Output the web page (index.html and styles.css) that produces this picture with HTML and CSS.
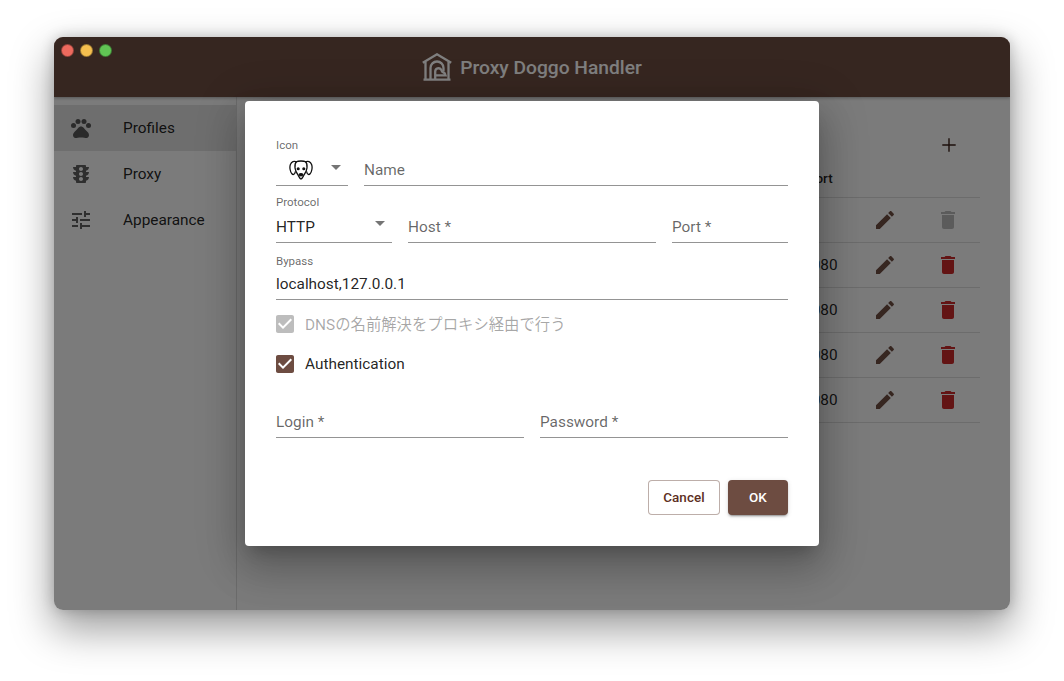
FILE: index.html
```html
<!DOCTYPE html>
<html lang="en">
<head>
<meta charset="utf-8">
<title>Proxy Doggo Handler</title>
<link rel="stylesheet" href="styles.css">
</head>
<body>
<div class="window">
  <header class="titlebar">
    <svg class="logo" viewBox="0 0 30 28" fill="none" stroke="currentColor" stroke-width="2.300"><path d="M.8 9.800 15 1.300l14.200 8.500M3.500 8.500V27M26.500 8.500V27M1.500 26.600h27M8.500 26V15a6.500 6.500 0 0 1 13 0v3.500"/><path d="M13.200 26v-7.500a3.300 3.300 0 0 1 6-1.800l1 2 2.500 1.500.8 2.200H13.200"/></svg>
    <span class="app-title">Proxy Doggo Handler</span>
  </header>
  <div class="body">
    <nav class="sidebar">
      <div class="nav-item nav-item-active">
        <svg class="icon" viewBox="0 0 24 24"><circle cx="4.500" cy="9.500" r="2.500"/><circle cx="9" cy="5.500" r="2.500"/><circle cx="15" cy="5.500" r="2.500"/><circle cx="19.500" cy="9.500" r="2.500"/><path d="M17.340 14.860c-.87-1.020-1.600-1.890-2.480-2.910-.46-.54-1.050-1.080-1.750-1.320-.11-.04-.22-.07-.33-.09-.25-.04-.52-.04-.78-.04s-.53 0-.79.050c-.11.020-.22.050-.33.090-.7.240-1.280.78-1.750 1.320-.87 1.020-1.600 1.890-2.480 2.910-1.310 1.310-2.920 2.760-2.620 4.790.29 1.020 1.020 2.030 2.330 2.320.73.150 3.060-.44 5.540-.44h.18c2.480 0 4.810.58 5.540.44 1.310-.29 2.040-1.310 2.330-2.320.31-2.040-1.300-3.490-2.610-4.800z"/></svg>
        <span>Profiles</span>
      </div>
      <div class="nav-item">
        <svg class="icon" viewBox="0 0 24 24"><path d="M20 10h-3V8.860c1.720-.45 3-2 3-3.860h-3V4c0-.55-.45-1-1-1H8c-.55 0-1 .45-1 1v1H4c0 1.860 1.280 3.410 3 3.860V10H4c0 1.860 1.280 3.410 3 3.860V15H4c0 1.860 1.280 3.410 3 3.860V20c0 .55.45 1 1 1h8c.55 0 1-.45 1-1v-1.140c1.720-.45 3-2 3-3.860h-3v-1.140c1.720-.45 3-2 3-3.860zm-8 9c-1.110 0-2-.9-2-2s.89-2 2-2c1.100 0 2 .9 2 2s-.89 2-2 2zm0-5c-1.110 0-2-.9-2-2s.89-2 2-2c1.100 0 2 .9 2 2s-.89 2-2 2zm0-5c-1.110 0-2-.9-2-2 0-1.110.89-2 2-2 1.100 0 2 .89 2 2 0 1.100-.89 2-2 2z"/></svg>
        <span>Proxy</span>
      </div>
      <div class="nav-item">
        <svg class="icon" viewBox="0 0 24 24"><path d="M3 17v2h6v-2H3zM3 5v2h10V5H3zm10 16v-2h8v-2h-8v-2h-2v6h2zM7 9v2H3v2h4v2h2V9H7zm14 4v-2H11v2h10zm-6-4h2V7h4V5h-4V3h-2v6z"/></svg>
        <span>Appearance</span>
      </div>
    </nav>
    <main class="content">
      <div class="toolbar">
        <svg class="icon icon-add" viewBox="0 0 24 24"><path d="M18.700 12.700h-6v6h-1.400v-6h-6v-1.400h6v-6h1.400v6h6z"/></svg>
      </div>
      <div class="table">
        <div class="row row-head"><span class="port">Port</span></div>
        <div class="row"><span class="port"></span><svg class="icon icon-edit" viewBox="0 0 24 24"><path d="M3 17.250V21h3.750L17.810 9.940l-3.750-3.750L3 17.250zM20.710 7.040c.39-.39.39-1.020 0-1.410l-2.340-2.340c-.39-.39-1.020-.39-1.410 0l-1.830 1.830 3.750 3.750 1.830-1.830z"/></svg><svg class="icon icon-del icon-del-off" viewBox="0 0 24 24"><path d="M6 19c0 1.100.9 2 2 2h8c1.100 0 2-.9 2-2V7H6v12zM19 4h-3.500l-1-1h-5l-1 1H5v2h14V4z"/></svg></div>
        <div class="row"><span class="port">8080</span><svg class="icon icon-edit" viewBox="0 0 24 24"><path d="M3 17.250V21h3.750L17.810 9.940l-3.750-3.750L3 17.250zM20.710 7.040c.39-.39.39-1.020 0-1.410l-2.340-2.340c-.39-.39-1.020-.39-1.410 0l-1.830 1.830 3.750 3.750 1.830-1.830z"/></svg><svg class="icon icon-del" viewBox="0 0 24 24"><path d="M6 19c0 1.100.9 2 2 2h8c1.100 0 2-.9 2-2V7H6v12zM19 4h-3.500l-1-1h-5l-1 1H5v2h14V4z"/></svg></div>
        <div class="row"><span class="port">8080</span><svg class="icon icon-edit" viewBox="0 0 24 24"><path d="M3 17.250V21h3.750L17.810 9.940l-3.750-3.750L3 17.250zM20.710 7.040c.39-.39.39-1.020 0-1.410l-2.340-2.340c-.39-.39-1.020-.39-1.410 0l-1.830 1.830 3.750 3.750 1.830-1.830z"/></svg><svg class="icon icon-del" viewBox="0 0 24 24"><path d="M6 19c0 1.100.9 2 2 2h8c1.100 0 2-.9 2-2V7H6v12zM19 4h-3.500l-1-1h-5l-1 1H5v2h14V4z"/></svg></div>
        <div class="row"><span class="port">8080</span><svg class="icon icon-edit" viewBox="0 0 24 24"><path d="M3 17.250V21h3.750L17.810 9.940l-3.750-3.750L3 17.250zM20.710 7.040c.39-.39.39-1.020 0-1.410l-2.340-2.340c-.39-.39-1.020-.39-1.410 0l-1.830 1.830 3.750 3.750 1.830-1.830z"/></svg><svg class="icon icon-del" viewBox="0 0 24 24"><path d="M6 19c0 1.100.9 2 2 2h8c1.100 0 2-.9 2-2V7H6v12zM19 4h-3.500l-1-1h-5l-1 1H5v2h14V4z"/></svg></div>
        <div class="row"><span class="port">8080</span><svg class="icon icon-edit" viewBox="0 0 24 24"><path d="M3 17.250V21h3.750L17.810 9.940l-3.750-3.750L3 17.250zM20.710 7.040c.39-.39.39-1.020 0-1.410l-2.340-2.340c-.39-.39-1.020-.39-1.410 0l-1.830 1.830 3.750 3.750 1.830-1.830z"/></svg><svg class="icon icon-del" viewBox="0 0 24 24"><path d="M6 19c0 1.100.9 2 2 2h8c1.100 0 2-.9 2-2V7H6v12zM19 4h-3.500l-1-1h-5l-1 1H5v2h14V4z"/></svg></div>
      </div>
    </main>
  </div>

  <div class="backdrop">
    <section class="modal">
      <div class="form-row">
        <div class="field field-icon">
          <span class="field-label">Icon</span>
          <div class="control">
            <svg class="dog" viewBox="0 0 24 20" fill="none" stroke="#111" stroke-width="1.300" stroke-linecap="round" stroke-linejoin="round"><path d="M7.500 1.800C9 .7 15 .7 16.500 1.800c1.200 1 1.800 3.200 1.500 6-.3 2.300-1.300 4.700-2.800 6.800-.9 1.300-1.800 4.400-3.200 4.400s-2.300-3.100-3.200-4.400C7.300 12.500 6.300 10.100 6 7.800c-.3-2.800.3-5 1.500-6z"/><path d="M7.500 1.800C5 .7 2.500 1.800 1.400 4.400.4 7 1 11.600 2.900 13.800c1.300 1.400 3 .5 3.300-1.800M16.500 1.800C19 .7 21.500 1.800 22.600 4.400c1 2.600.4 7.200-1.500 9.400-1.300 1.400-3 .5-3.300-1.800"/><path d="M10.200 14.300c.8-.6 2.800-.6 3.600 0-.2 1-1.100 1.600-1.800 1.600s-1.600-.6-1.800-1.600z" fill="#111"/><circle cx="9.200" cy="8.800" r=".9" fill="#111"/><circle cx="14.800" cy="8.800" r=".9" fill="#111"/></svg>
            <svg class="arrow" viewBox="0 0 24 24"><path d="M7 10l5 5 5-5z"/></svg>
          </div>
        </div>
        <div class="field field-grow">
          <div class="control"><span class="placeholder">Name</span></div>
        </div>
      </div>
      <div class="form-row">
        <div class="field field-protocol">
          <span class="field-label">Protocol</span>
          <div class="control">
            <span class="value">HTTP</span>
            <svg class="arrow" viewBox="0 0 24 24"><path d="M7 10l5 5 5-5z"/></svg>
          </div>
        </div>
        <div class="field field-grow">
          <div class="control"><span class="placeholder">Host *</span></div>
        </div>
        <div class="field field-port">
          <div class="control"><span class="placeholder">Port *</span></div>
        </div>
      </div>
      <div class="form-row form-row-bypass">
        <div class="field field-grow">
          <span class="field-label">Bypass</span>
          <div class="control"><span class="value">localhost,127.0.0.1</span></div>
        </div>
      </div>
      <div class="checks">
        <label class="check check-off">
          <svg class="icon" viewBox="0 0 24 24"><path d="M19 3H5c-1.110 0-2 .9-2 2v14c0 1.100.89 2 2 2h14c1.100 0 2-.9 2-2V5c0-1.110-.89-2-2-2zm-9 14l-5-5 1.410-1.410L10 14.170l7.590-7.590L19 8l-9 9z"/></svg>
          <span class="check-text">DNSの名前解決をプロキシ経由で行う</span>
        </label>
        <label class="check">
          <svg class="icon" viewBox="0 0 24 24"><path d="M19 3H5c-1.110 0-2 .9-2 2v14c0 1.100.89 2 2 2h14c1.100 0 2-.9 2-2V5c0-1.110-.89-2-2-2zm-9 14l-5-5 1.410-1.410L10 14.170l7.590-7.590L19 8l-9 9z"/></svg>
          <span class="check-text">Authentication</span>
        </label>
      </div>
      <div class="form-row form-row-auth">
        <div class="field field-half"><div class="control"><span class="placeholder">Login *</span></div></div>
        <div class="field field-half"><div class="control"><span class="placeholder">Password *</span></div></div>
      </div>
      <div class="actions">
        <button class="btn btn-outline" type="button">Cancel</button>
        <button class="btn btn-primary" type="button">OK</button>
      </div>
    </section>
  </div>

  <div class="traffic">
    <span class="light light-red"></span>
    <span class="light light-yellow"></span>
    <span class="light light-green"></span>
  </div>
</div>
</body>
</html>
```
FILE: styles.css
```css
* { box-sizing: border-box; }
html, body { height: 100%; }
body {
  margin: 0;
  padding: 37px 54px 71px;
  background: #fff;
  font-family: Roboto, "Noto Sans CJK JP", sans-serif;
  color: rgba(0,0,0,.87);
  overflow: hidden;
}
.window {
  position: relative;
  height: 573px;
  border-radius: 9px;
  background: #f6f6f6;
  box-shadow: 0 18px 40px 2px rgba(0,0,0,.38), 0 0 14px rgba(0,0,0,.2);
  overflow: hidden;
  display: flex;
  flex-direction: column;
}
.titlebar {
  height: 60px;
  flex: none;
  background: #6d4c41;
  color: #fff;
  display: flex;
  align-items: center;
  justify-content: center;
  gap: 8px;
  box-shadow: 0 1px 3px rgba(0,0,0,.3);
  position: relative;
}
.logo { width: 30px; height: 28px; }
.app-title { font-size: 19.200px; font-weight: 500; }
.body { flex: 1; display: flex; min-height: 0; }
.sidebar {
  width: 183px;
  flex: none;
  padding-top: 8px;
  border-right: 1px solid rgba(0,0,0,.12);
}
.nav-item {
  height: 46px;
  display: flex;
  align-items: center;
  padding-left: 15px;
  gap: 30px;
  font-size: 15.360px;
}
.nav-item-active { background: rgba(0,0,0,.1); }
.icon { width: 24px; height: 24px; fill: currentColor; flex: none; display: block; }
.nav-item .icon { fill: rgba(0,0,0,.62); }
.content { flex: 1; padding: 36px 30px 0 0; min-width: 0; }
.toolbar { height: 24px; display: flex; justify-content: flex-end; padding-right: 19px; }
.icon-add { color: #3a2018; }
.table { margin: 8px 0 0 30px; }
.row {
  height: 45px;
  display: flex;
  align-items: center;
  justify-content: flex-end;
  border-bottom: 1px solid rgba(0,0,0,.12);
  font-size: 15.360px;
}
.row-head { height: 33px; font-size: 13.440px; font-weight: 500; justify-content: flex-start; padding-left: 540px; align-items: flex-start; padding-top: 6px; }
.port { display: block; }
.row .port { width: 70px; margin-right: auto; margin-left: 536px; }
.row-head .port { width: auto; margin: 0; }
.icon-edit { color: #6d4c41; margin-right: 39px; }
.icon-del { color: #c62828; margin-right: 20px; }
.icon-del-off { color: rgba(0,0,0,.26); }
.backdrop {
  position: absolute;
  inset: 0;
  background: rgba(0,0,0,.5);
  display: flex;
  align-items: center;
  justify-content: center;
}
.modal {
  width: 574px;
  height: 445px;
  padding: 38px 31px 31px;
  background: #fff;
  border-radius: 4px;
  box-shadow: 0 11px 15px -7px rgba(0,0,0,.2), 0 24px 38px 3px rgba(0,0,0,.14), 0 9px 46px 8px rgba(0,0,0,.16);
  display: flex;
  flex-direction: column;
}
.form-row { display: flex; gap: 16px; align-items: flex-end; margin-bottom: 10px; }
.form-row-bypass { margin-bottom: 4px; }
.form-row-auth { margin-top: 19px; margin-bottom: 0; }
.field { display: flex; flex-direction: column; flex: none; }
.field-grow { flex: 1; }
.field-half { flex: 1; }
.field-icon { width: 72px; }
.field-protocol { width: 116px; }
.field-port { width: 116px; }
.field-label { height: 13px; line-height: 12px; font-size: 11.520px; color: rgba(0,0,0,.6); }
.field-label + .control { height: 34px; }
.form-row-bypass .field-label { height: 15px; padding-top: 2px; }
.form-row-bypass .field-label + .control { height: 32px; }
.control {
  height: 35px;
  padding-bottom: 5px;
  border-bottom: 1px solid rgba(0,0,0,.42);
  display: flex;
  align-items: flex-end;
  font-size: 15.360px;
  line-height: 19px;
}
.placeholder { color: rgba(0,0,0,.6); }
.value { color: rgba(0,0,0,.87); }
.dog { width: 24px; height: 20px; margin-left: 13px; margin-bottom: 0; }
.arrow { width: 24px; height: 24px; margin-left: auto; fill: rgba(0,0,0,.54); align-self: flex-start; margin-top: 3px; }
.field-protocol .arrow { margin-top: 2px; }
.check { height: 40px; display: flex; align-items: center; gap: 8px; margin-left: -3px; font-size: 15.360px; }
.check-text { line-height: 19px; height: 19px; }
.check-off .check-text { margin-top: 2px; }
.check .icon { color: #6d4c41; }
.check-off { color: rgba(0,0,0,.35); }
.check-off .icon { color: rgba(0,0,0,.26); }
.actions { margin-top: auto; display: flex; justify-content: flex-end; gap: 8px; }
.btn {
  font-family: inherit;
  font-size: 13.440px;
  font-weight: 500;
  letter-spacing: .1px;
  border-radius: 4px;
  height: 35px;
  padding: 0;
}
.btn-outline { width: 72px; background: #fff; color: #5d2e22; border: 1px solid rgba(109,76,65,.45); }
.btn-primary { width: 60px; background: #6d4c41; color: #fff; border: 0; box-shadow: 0 3px 1px -2px rgba(0,0,0,.2), 0 2px 2px 0 rgba(0,0,0,.14), 0 1px 5px 0 rgba(0,0,0,.12); }
.traffic { position: absolute; top: 6.500px; left: 6.500px; display: flex; gap: 6px; }
.light { width: 13px; height: 13px; border-radius: 50%; border: 1px solid rgba(0,0,0,.35); }
.light-red { background: #ed6a5e; }
.light-yellow { background: #f5bf4f; }
.light-green { background: #61c554; }
```
